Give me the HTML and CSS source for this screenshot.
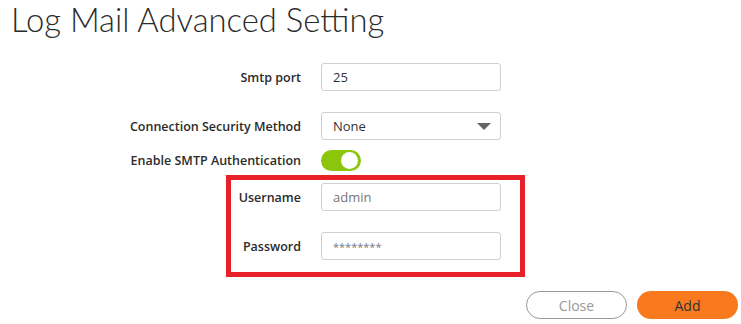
FILE: index.html
```html
<!DOCTYPE html>
<html lang="en">
<head>
    <meta charset="UTF-8">
    <title>Log Mail Advanced Setting</title>
    <link rel="stylesheet" href="styles.css">
</head>
<body>

<div class="page">
    <h1 class="page-title">Log Mail Advanced Setting</h1>

    <div class="form-row row-port">
        <label class="form-label">Smtp port</label>
        <input type="text" class="form-input" value="25">
    </div>

    <div class="form-row row-security">
        <label class="form-label">Connection Security Method</label>
        <div class="form-select">
            <span>None</span>
            <span class="select-arrow"></span>
        </div>
    </div>

    <div class="form-row row-auth">
        <label class="form-label">Enable SMTP Authentication</label>
        <div class="toggle"><span class="toggle-knob"></span></div>
    </div>

    <!-- Highlighted credentials -->
    <div class="auth-box">
        <div class="form-row row-user">
            <label class="form-label">Username</label>
            <input type="text" class="form-input muted" value="admin">
        </div>
        <div class="form-row row-pass">
            <label class="form-label">Password</label>
            <input type="text" class="form-input muted pass" value="********">
        </div>
    </div>

    <div class="actions">
        <button class="btn btn-close">Close</button>
        <button class="btn btn-add">Add</button>
    </div>
</div>

</body>
</html>
```

FILE: styles.css
```css
body {
    margin: 0;
    background-color: #fff;
    font-family: "Open Sans", Arial, sans-serif;
    color: #333;
}
.page {
    width: 741px;
    height: 324px;
    overflow: hidden;
}
.page-title {
    margin: 0;
    padding: 0 0 0 11px;
    height: 44px;
    line-height: 40px;
    font-family: Lato, "Open Sans", sans-serif;
    font-weight: 300;
    font-size: 32.8px;
    color: #2b2b2b;
}

/* Form rows */
.form-row {
    display: flex;
    align-items: center;
}
.form-label {
    width: 321px;
    padding-right: 20px;
    box-sizing: border-box;
    text-align: right;
    font-size: 12.5px;
    font-weight: 600;
    color: #2b2b2b;
}
.form-input, .form-select {
    width: 180px;
    height: 28px;
    box-sizing: border-box;
    border: 1px solid #d0d0d0;
    border-radius: 3px;
    padding: 0 11px;
    font-family: "Open Sans", Arial, sans-serif;
    font-size: 13px;
    color: #333;
    background-color: #fff;
    outline: none;
}
.form-input.muted {
    color: #777;
}
.form-input.pass {
    font-size: 11px;
}
.form-select {
    display: flex;
    align-items: center;
    justify-content: space-between;
    padding-right: 9px;
}
.select-arrow {
    width: 0;
    height: 0;
    border-left: 7px solid transparent;
    border-right: 7px solid transparent;
    border-top: 7px solid #666;
}
.row-port {
    margin-top: 19px;
}
.row-security {
    margin-top: 21px;
}
.row-auth {
    margin-top: 9px;
    height: 22px;
}
.toggle {
    position: relative;
    width: 40px;
    height: 21px;
    border-radius: 11px;
    background-color: #8cc60c;
}
.toggle-knob {
    position: absolute;
    top: 2px;
    right: 3px;
    width: 17px;
    height: 17px;
    border-radius: 50%;
    background-color: #fff;
}

/* Red highlight round credentials */
.auth-box {
    margin: 4px 0 0 226px;
    width: 299px;
    height: 102px;
    box-sizing: border-box;
    border: 5px solid #e8202a;
}
.auth-box .form-label {
    width: 90px;
}
.row-user {
    margin-top: 3px;
}
.row-pass {
    margin-top: 21px;
}

/* Buttons */
.actions {
    display: flex;
    justify-content: flex-end;
    gap: 10px;
    padding: 14px 3px 0 0;
}
.btn {
    width: 101px;
    height: 28px;
    border-radius: 14px;
    font-family: "Open Sans", Arial, sans-serif;
    font-size: 14px;
    cursor: pointer;
}
.btn-close {
    background-color: #fff;
    border: 1px solid #999;
    color: #999;
}
.btn-add {
    background-color: #f97a1e;
    border: none;
    color: #333;
}
```
